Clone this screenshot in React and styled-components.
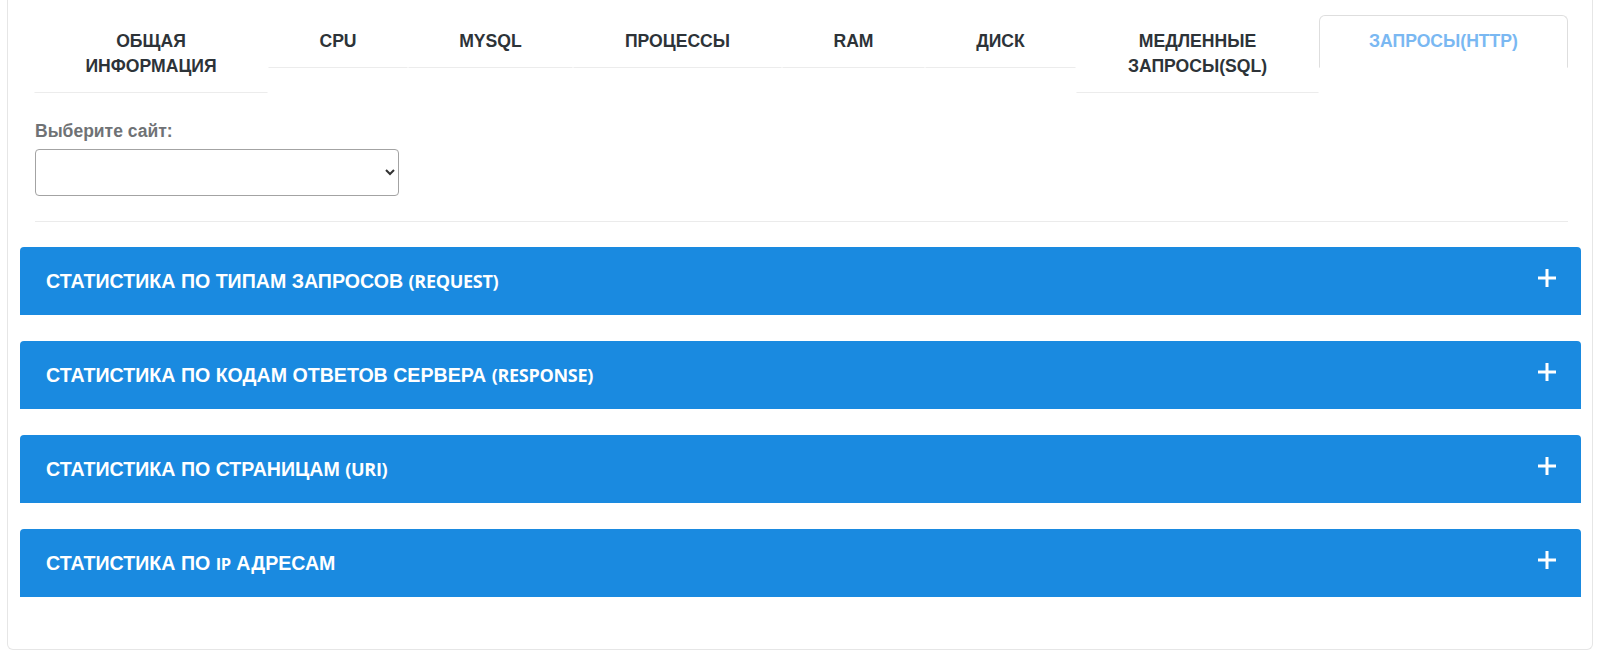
import React from 'react';
import styled, { createGlobalStyle } from 'styled-components';

const GlobalStyle = createGlobalStyle`
  html, body {
    margin: 0;
    padding: 0;
    background: #ffffff;
    font-family: "Liberation Sans", Arial, sans-serif;
  }
`;

const Card = styled.div`
  box-sizing: border-box;
  width: 1586px;
  margin-left: 7px;
  border: 1px solid #e6e6e6;
  border-top: none;
  border-radius: 0 0 6px 6px;
  padding: 15px 24px 52px 26px;
  background: #fff;
`;

const TabRow = styled.div`
  display: flex;
  align-items: flex-start;
`;

const Tab = styled.div`
  box-sizing: border-box;
  width: ${p => p.$w}px;
  flex: none;
  padding: 13px 10px 13px;
  text-align: center;
  font-size: 17.6px;
  font-weight: 700;
  line-height: 25px;
  text-transform: uppercase;
  color: ${p => (p.$active ? '#7ab8f2' : '#2d3338')};
  border: 1px solid ${p => (p.$active ? '#dedede' : 'transparent')};
  border-bottom: 1px solid ${p => (p.$active ? 'transparent' : '#ececec')};
  border-radius: ${p => (p.$active ? '6px 6px 0 0' : '0')};
  cursor: pointer;
`;

const Field = styled.div`
  margin-top: 25px;
  display: flex;
  flex-direction: column;
  gap: 5px;
`;

const Label = styled.label`
  font-size: 17.5px;
  font-weight: 700;
  line-height: 26px;
  color: #6f7275;
  margin-left: 1px;
`;

const Select = styled.select`
  box-sizing: border-box;
  width: 364px;
  height: 47px;
  margin-left: 1px;
  border: 1px solid #a3a3a3;
  border-radius: 4px;
  background: #fff;
  font-family: "Liberation Sans", Arial, sans-serif;
  font-size: 16px;
  color: #333;
`;

const Divider = styled.hr`
  margin: 25px 0 0 1px;
  border: none;
  border-top: 1px solid #ebebeb;
`;

const Panels = styled.div`
  margin: 25px -13px 0 -14px;
  display: flex;
  flex-direction: column;
  gap: 26px;
`;

const PanelHead = styled.div`
  height: 68px;
  box-sizing: border-box;
  display: flex;
  align-items: center;
  justify-content: space-between;
  padding: 0 24px 0 26px;
  background: #1a8ae0;
  border-radius: 4px 4px 0 0;
  color: #fff;
  cursor: pointer;
`;

const Title = styled.div`
  font-size: 19.6px;
  font-weight: 700;
  text-transform: uppercase;
`;

const Latin = styled.span`
  font-family: "Open Sans", sans-serif;
  font-weight: 700;
  letter-spacing: -0.3px;
  font-size: ${p => (p.$small ? '16.5px' : '18px')};
`;

const Plus = styled.svg`
  width: 20px;
  height: 20px;
  margin-top: -6px;
`;

const tabs = [
  { w: 234, lines: ['Общая', 'информация'] },
  { w: 140, lines: ['CPU'] },
  { w: 165, lines: ['MySQL'] },
  { w: 209, lines: ['Процессы'] },
  { w: 143, lines: ['RAM'] },
  { w: 151, lines: ['Диск'] },
  { w: 243, lines: ['Медленные', 'запросы(SQL)'] },
  { w: 249, lines: ['Запросы(HTTP)'], active: true },
];

const panels = [
  ['Статистика по типам запросов ', { t: '(REQUEST)' }],
  ['Статистика по кодам ответов сервера ', { t: '(RESPONSE)' }],
  ['Статистика по страницам ', { t: '(URI)' }],
  ['Статистика по ', { t: 'IP', small: true }, ' адресам'],
];

const App = () => {
  return (
    <>
      <GlobalStyle />
      <Card>
        <TabRow>
          {tabs.map((tab, i) => (
            <Tab key={i} $w={tab.w} $active={tab.active}>
              {tab.lines.map((l, j) => (
                <React.Fragment key={j}>
                  {j > 0 && <br />}
                  {l}
                </React.Fragment>
              ))}
            </Tab>
          ))}
        </TabRow>

        <Field>
          <Label>Выберите сайт:</Label>
          <Select defaultValue="">
            <option value=""></option>
          </Select>
        </Field>

        <Divider />

        <Panels>
          {panels.map((parts, i) => (
            <PanelHead key={i}>
              <Title>
                {parts.map((p, j) =>
                  typeof p === 'string' ? (
                    <React.Fragment key={j}>{p}</React.Fragment>
                  ) : (
                    <Latin key={j} $small={p.small}>{p.t}</Latin>
                  )
                )}
              </Title>
              <Plus viewBox="0 0 20 20">
                <path d="M10 1v18M1 10h18" stroke="#fff" strokeWidth="3" />
              </Plus>
            </PanelHead>
          ))}
        </Panels>
      </Card>
    </>
  );
};

export default App;
